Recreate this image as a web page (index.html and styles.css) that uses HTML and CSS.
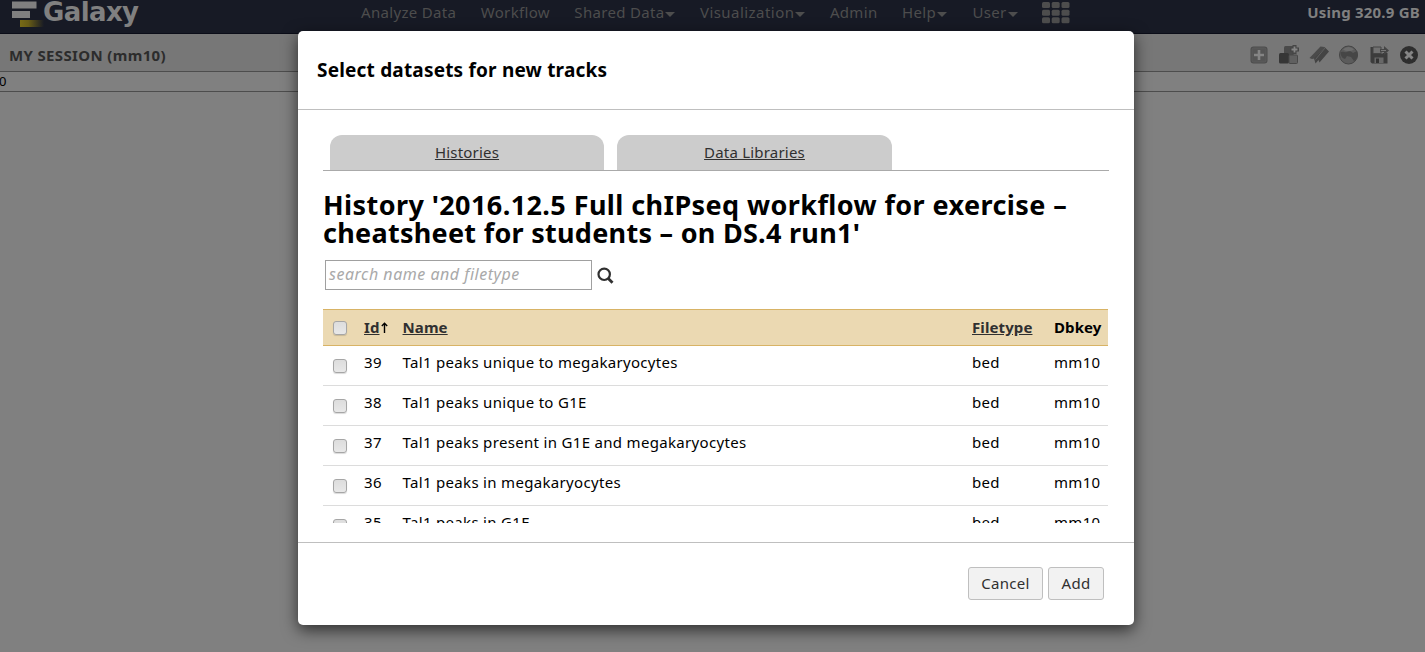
FILE: index.html
```html
<!DOCTYPE html>
<html lang="en">
<head>
<meta charset="utf-8">
<title>Galaxy</title>
<link rel="stylesheet" href="styles.css">
</head>
<body>
<header class="masthead">
  <div class="brand">
    <svg width="32" height="28" viewBox="0 0 32 28">
      <defs><linearGradient id="fade"><stop offset="0" stop-color="#786a16"/><stop offset=".35" stop-color="#685c16"/><stop offset="1" stop-color="#171a25"/></linearGradient></defs>
      <rect x="0" y="1.5" width="24.5" height="7" fill="#808080"/>
      <rect x="0" y="11" width="18" height="7" fill="#808080"/>
      <rect x="8" y="20" width="24" height="7" fill="url(#fade)"/>
    </svg>
    <span class="brand-name">Galaxy</span>
  </div>
  <nav class="menu">
    <span class="item">Analyze Data</span>
    <span class="item">Workflow</span>
    <span class="item">Shared Data<i class="caret"></i></span>
    <span class="item wide">Visualization<i class="caret"></i></span>
    <span class="item">Admin</span>
    <span class="item">Help<i class="caret"></i></span>
    <span class="item user">User<i class="caret"></i></span>
    <svg class="apps" width="28" height="22" viewBox="0 0 28 22"><rect x="0" y="0" width="8" height="6" rx="1.5"/><rect x="9.7" y="0" width="8" height="6" rx="1.5"/><rect x="19.5" y="0" width="8" height="6" rx="1.5"/><rect x="0" y="7.7" width="8" height="6" rx="1.5"/><rect x="9.7" y="7.7" width="8" height="6" rx="1.5"/><rect x="19.5" y="7.7" width="8" height="6" rx="1.5"/><rect x="0" y="15.3" width="8" height="6" rx="1.5"/><rect x="9.7" y="15.3" width="8" height="6" rx="1.5"/><rect x="19.5" y="15.3" width="8" height="6" rx="1.5"/></svg>
  </nav>
  <span class="quota">Using 320.9 GB</span>
</header>
<div class="session">
  <span class="session-name">MY SESSION (mm10)</span>
  <div class="tools">
    <svg width="20" height="20" viewBox="0 0 20 20"><rect x="1.500" y="1.500" width="17" height="17" rx="3" fill="#4d4d4d"/><rect x="3" y="3" width="14" height="14" rx="1.500" fill="#555" stroke="#5c5c5c"/><path d="M10 5v10M5 10h10" stroke="#858585" stroke-width="2.600"/></svg>
    <svg width="20" height="20" viewBox="0 0 20 20"><rect x="5" y="1" width="10" height="9" rx="1.500" fill="#4a4a4a"/><rect x="0" y="8" width="10" height="10.500" rx="1.500" fill="#363636"/><rect x="10" y="10" width="8.500" height="8.500" rx="1" fill="#606060" stroke="#484848"/><path d="M15.500 0v9M11 4.500h9" stroke="#454545" stroke-width="4"/><path d="M15.500 1.500v6M12.500 4.500h6" stroke="#858585" stroke-width="1.800"/></svg>
    <svg width="20" height="20" viewBox="0 0 20 20"><path d="m11.500 1.500 4 .5-10 11.500L3 14l-2.500-1z" fill="#4a4a4a"/><path d="m15.500 2 4.500 4.500-9.500 11-1-2.500-3 3.500-1.500-5z" fill="#444"/><path d="M16 3 6.500 14.500" stroke="#606060" stroke-width="1"/></svg>
    <svg width="20" height="20" viewBox="0 0 20 20"><circle cx="9.500" cy="10" r="9" fill="#5b5b5b" stroke="#454545"/><path d="M2 7c3-1 4 1 6 0s4-1 6 1l4-2c2 6-1 9-3 10l-3-4-4-1-2 3c-3-1-5-4-4-7z" fill="#464646"/><path d="M4 4.500C7 1 12 1 15 4.500c-3 2-8 2-11 0z" fill="#6c6c6c"/></svg>
    <svg width="20" height="20" viewBox="0 0 20 20"><path d="M1.500 2H4v6.500h10V8h4.500v10.500H3L1.500 17z" fill="#3c3c3c"/><path d="M4 2h8v6.500H4z" fill="#717171" stroke="#444"/><path d="M5.500 12.500h9V18h-9z" fill="#686868"/><path d="M7 13.500h3V18H7z" fill="#333"/><path d="M11 4h4V1l5 4.500-5 4.500V7h-4z" fill="#454545"/><path d="M12 5.500h5" stroke="#777"/></svg>
    <svg width="20" height="20" viewBox="0 0 20 20"><circle cx="10" cy="10" r="9" fill="#2e2e2e"/><path d="m6.500 6.500 7 7m0-7-7 7" stroke="#858585" stroke-width="3"/></svg>
  </div>
</div>
<div class="ruler">0</div>

<section class="modal">
  <header class="modal-head">Select datasets for new tracks</header>
  <div class="modal-body">
    <div class="tabs">
      <a class="tab">Histories</a>
      <a class="tab">Data Libraries</a>
    </div>
    <h2><span class="line-one">History '2016.12.5 Full chIPseq workflow for exercise –</span><br>cheatsheet for students – on DS.4 run1'</h2>
    <div class="search-row">
      <div class="search">search name and filetype</div>
      <svg width="18" height="18" viewBox="0 0 18 18"><circle cx="7.200" cy="7.300" r="5.700" fill="none" stroke="#303030" stroke-width="2.200"/><path d="m11.300 11.500 4.200 4.300" stroke="#303030" stroke-width="2.800"/></svg>
    </div>
    <div class="grid">
      <div class="row head"><i class="check"></i><span class="sorted"><u>Id</u><svg width="7" height="11" viewBox="0 0 7 11"><path d="M3.500 11V1.500M.8 4l2.700-2.700L6.200 4" fill="none" stroke="#000" stroke-width="1.400"/></svg></span><u>Name</u><u>Filetype</u><span>Dbkey</span></div>
      <div class="row"><i class="check"></i><span>39</span><span>Tal1 peaks unique to megakaryocytes</span><span>bed</span><span>mm10</span></div>
      <div class="row"><i class="check"></i><span>38</span><span>Tal1 peaks unique to G1E</span><span>bed</span><span>mm10</span></div>
      <div class="row"><i class="check"></i><span>37</span><span>Tal1 peaks present in G1E and megakaryocytes</span><span>bed</span><span>mm10</span></div>
      <div class="row"><i class="check"></i><span>36</span><span>Tal1 peaks in megakaryocytes</span><span>bed</span><span>mm10</span></div>
      <div class="row"><i class="check"></i><span>35</span><span>Tal1 peaks in G1E</span><span>bed</span><span>mm10</span></div>
    </div>
  </div>
  <footer class="modal-foot">
    <div class="button cancel">Cancel</div>
    <div class="button add">Add</div>
  </footer>
</section>
</body>
</html>
```
FILE: styles.css
```css
* { box-sizing: border-box; }
body {
  margin: 0;
  height: 652px;
  overflow: hidden;
  background: #808080;
  color: #000;
  font: 15px/20px "Noto Sans", sans-serif;
  letter-spacing: .32px;
}
svg { display: block; flex: none; }

.masthead {
  display: flex;
  height: 34px;
  padding: 0 5px 0 12px;
  background: #171a25;
  border-bottom: 1px solid #0b0d18;
  color: #4d4d4d;
}
.brand { display: flex; width: 349px; }
.brand-name {
  margin: -3px 0 0 -1px;
  font: bold 26px/30px "DejaVu Sans", sans-serif;
  letter-spacing: -.6px;
  color: #808080;
}
.menu { display: flex; gap: 24.500px; padding-top: 2px; }
.item { display: flex; align-items: center; height: 20px; }
.wide { letter-spacing: .45px; }
.user { margin-left: 1px; }
.caret {
  margin: 4px 0 0 1px;
  border: 5px solid transparent;
  border-top-color: #4d4d4d;
  border-bottom: 0;
}
.apps { fill: #4d4d4d; }
.quota {
  margin: 2px 0 0 auto;
  font-weight: bold;
  letter-spacing: .22px;
  color: #808080;
}

.session {
  display: flex;
  justify-content: space-between;
  align-items: center;
  height: 38px;
  padding: 4px 6px 0 9px;
  background: #777;
  border-bottom: 1px solid #4d4d4d;
}
.session-name { font-weight: bold; letter-spacing: .35px; color: #2c2c2c; }
.tools { display: flex; gap: 10px; }
.ruler {
  height: 20px;
  border-bottom: 1px solid #4d4d4d;
  font-size: 13px;
  line-height: 19px;
  text-indent: -1px;
}

.modal {
  position: absolute;
  left: 298px;
  top: 31px;
  width: 836px;
  height: 594px;
  background: #fff;
  border-radius: 5px;
  box-shadow: 0 5px 16px rgba(0, 0, 0, .65);
}
.modal-head {
  height: 79px;
  padding: 26px 19px;
  border-bottom: 1px solid #bfbfbf;
  font-size: 19px;
  line-height: 26px;
  font-weight: bold;
  letter-spacing: .19px;
}
.modal-body { height: 413px; padding: 25px 25px 0; overflow: hidden; }
.tabs {
  display: flex;
  gap: 13px;
  height: 36px;
  padding-left: 7px;
  border-bottom: 1px solid #aaa;
}
.tab {
  width: 274px;
  height: 35px;
  border-radius: 12px 12px 0 0;
  background: #ccc;
  color: #303030;
  line-height: 35px;
  letter-spacing: .2px;
  text-align: center;
  text-decoration: underline;
}
.tab + .tab { width: 275px; }
h2 {
  margin: 20px 0 13px;
  font-size: 27px;
  line-height: 28px;
  letter-spacing: .28px;
  white-space: nowrap;
}
.line-one { letter-spacing: .41px; }
.search-row { display: flex; align-items: center; gap: 5px; padding-left: 2px; }
.search-row svg { margin-top: 2px; }
.search {
  width: 267px;
  height: 30px;
  padding-left: 3px;
  border: 1px solid #a0a0a0;
  color: #a9a9a9;
  font-size: 16px;
  line-height: 27px;
  font-style: italic;
  letter-spacing: .52px;
}
.grid { width: 785px; height: 214px; margin-top: 19px; overflow: hidden; }
.row {
  display: grid;
  grid-template-columns: 41px 38.500px 569.500px 82px 54px;
  height: 40px;
  padding-top: 6px;
  border-bottom: 1px solid #dcdcdc;
}
.head {
  height: 37px;
  background: #ebd9b2;
  border-top: 1px solid #d8b365;
  border-bottom: 1px solid #d8b365;
  font-weight: bold;
  letter-spacing: .1px;
}
.head u { color: #303030; }
.sorted { display: flex; }
.sorted svg { margin: 5px 0 0 1px; }
.check {
  width: 14px;
  height: 14px;
  margin: 7px 0 0 10px;
  border: 1px solid #a6a6a6;
  border-radius: 3px;
  background: linear-gradient(#ddd, #e8e8e8);
  box-shadow: 0 1px 1px rgba(0, 0, 0, .15);
}
.head { padding-top: 7px; }
.head .check { margin-top: 4px; }

.modal-foot {
  display: flex;
  justify-content: flex-end;
  gap: 5px;
  margin-top: 19px;
  padding: 24px 30px 0;
  border-top: 1px solid #bfbfbf;
}
.button {
  height: 33px;
  border: 1px solid #bfbfbf;
  border-radius: 3px;
  background: #f2f2f2;
  color: #303030;
  line-height: 31px;
  text-align: center;
}
.cancel { width: 75px; }
.add { width: 56px; }
```
